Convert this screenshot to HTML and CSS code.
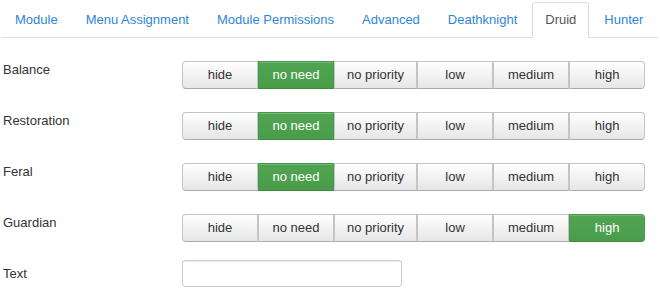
FILE: index.html
```html
<!DOCTYPE html>
<html>
<head>
  <meta charset="utf-8">
  <title>Module - Druid</title>
  <link rel="stylesheet" href="styles.css">
</head>
<body>

<ul class="nav-tabs">
  <li><a href="#">Module</a></li>
  <li><a href="#">Menu Assignment</a></li>
  <li><a href="#">Module Permissions</a></li>
  <li><a href="#">Advanced</a></li>
  <li><a href="#">Deathknight</a></li>
  <li class="active"><a href="#">Druid</a></li>
  <li><a href="#">Hunter</a></li>
</ul>

<div class="form">
  <div class="control-group">
    <label class="control-label">Balance</label>
    <div class="btn-group">
      <button class="btn">hide</button>
      <button class="btn active">no need</button>
      <button class="btn">no priority</button>
      <button class="btn">low</button>
      <button class="btn">medium</button>
      <button class="btn">high</button>
    </div>
  </div>

  <div class="control-group">
    <label class="control-label">Restoration</label>
    <div class="btn-group">
      <button class="btn">hide</button>
      <button class="btn active">no need</button>
      <button class="btn">no priority</button>
      <button class="btn">low</button>
      <button class="btn">medium</button>
      <button class="btn">high</button>
    </div>
  </div>

  <div class="control-group">
    <label class="control-label">Feral</label>
    <div class="btn-group">
      <button class="btn">hide</button>
      <button class="btn active">no need</button>
      <button class="btn">no priority</button>
      <button class="btn">low</button>
      <button class="btn">medium</button>
      <button class="btn">high</button>
    </div>
  </div>

  <div class="control-group">
    <label class="control-label">Guardian</label>
    <div class="btn-group">
      <button class="btn">hide</button>
      <button class="btn">no need</button>
      <button class="btn">no priority</button>
      <button class="btn">low</button>
      <button class="btn">medium</button>
      <button class="btn active">high</button>
    </div>
  </div>

  <div class="control-group text-row">
    <label class="control-label">Text</label>
    <input type="text" class="text-input">
  </div>
</div>

</body>
</html>
```

FILE: styles.css
```css
body {
  font-family: "Liberation Sans", Arial, sans-serif;
  font-size: 13px;
  line-height: 18px;
  color: #333;
  margin: 0;
  background: #fff;
}
.nav-tabs {
  display: flex;
  list-style: none;
  margin: 0 2px;
  padding: 2px 0 0;
  border-bottom: 1px solid #ddd;
  white-space: nowrap;
}
.nav-tabs li {
  flex-shrink: 0;
  margin-bottom: -1px;
  margin-right: 2px;
}
.nav-tabs a {
  display: block;
  padding: 8px 12px;
  line-height: 18px;
  border: 1px solid transparent;
  border-radius: 4px 4px 0 0;
  color: #2f86d6;
  text-decoration: none;
}
.nav-tabs .active a {
  color: #555;
  background: #fff;
  border-color: #ddd #ddd transparent;
}
.form {
  padding: 18px 0 0 3px;
}
.control-group {
  display: flex;
  align-items: flex-start;
  margin-bottom: 18px;
}
.control-group.text-row {
  margin-bottom: 0;
}
.control-label {
  width: 179px;
  flex-shrink: 0;
  padding-top: 5px;
  line-height: 18px;
}
.btn-group {
  display: flex;
  margin-top: 5px;
}
.btn {
  box-sizing: border-box;
  min-width: 76px;
  height: 28px;
  padding: 4px 12px;
  font-family: inherit;
  font-size: 13px;
  line-height: 18px;
  white-space: nowrap;
  color: #333;
  background: linear-gradient(#ffffff, #e6e6e6);
  border: 1px solid #c4c4c4;
  border-bottom-color: #ababab;
  border-radius: 0;
  box-shadow: inset 0 1px 0 rgba(255,255,255,.2);
}
.btn:first-child {
  border-radius: 4px 0 0 4px;
}
.btn:last-child {
  border-radius: 0 4px 4px 0;
}
.btn.active {
  color: #fff;
  background: linear-gradient(#51a451, #499c49);
  border-color: #46984a;
  border-bottom-color: #3d8a3d;
}
.text-input {
  box-sizing: border-box;
  width: 220px;
  height: 27px;
  margin: 0;
  padding: 4px 6px;
  border: 1px solid #ccc;
  border-radius: 3px;
  box-shadow: inset 0 1px 1px rgba(0,0,0,.075);
}
```
